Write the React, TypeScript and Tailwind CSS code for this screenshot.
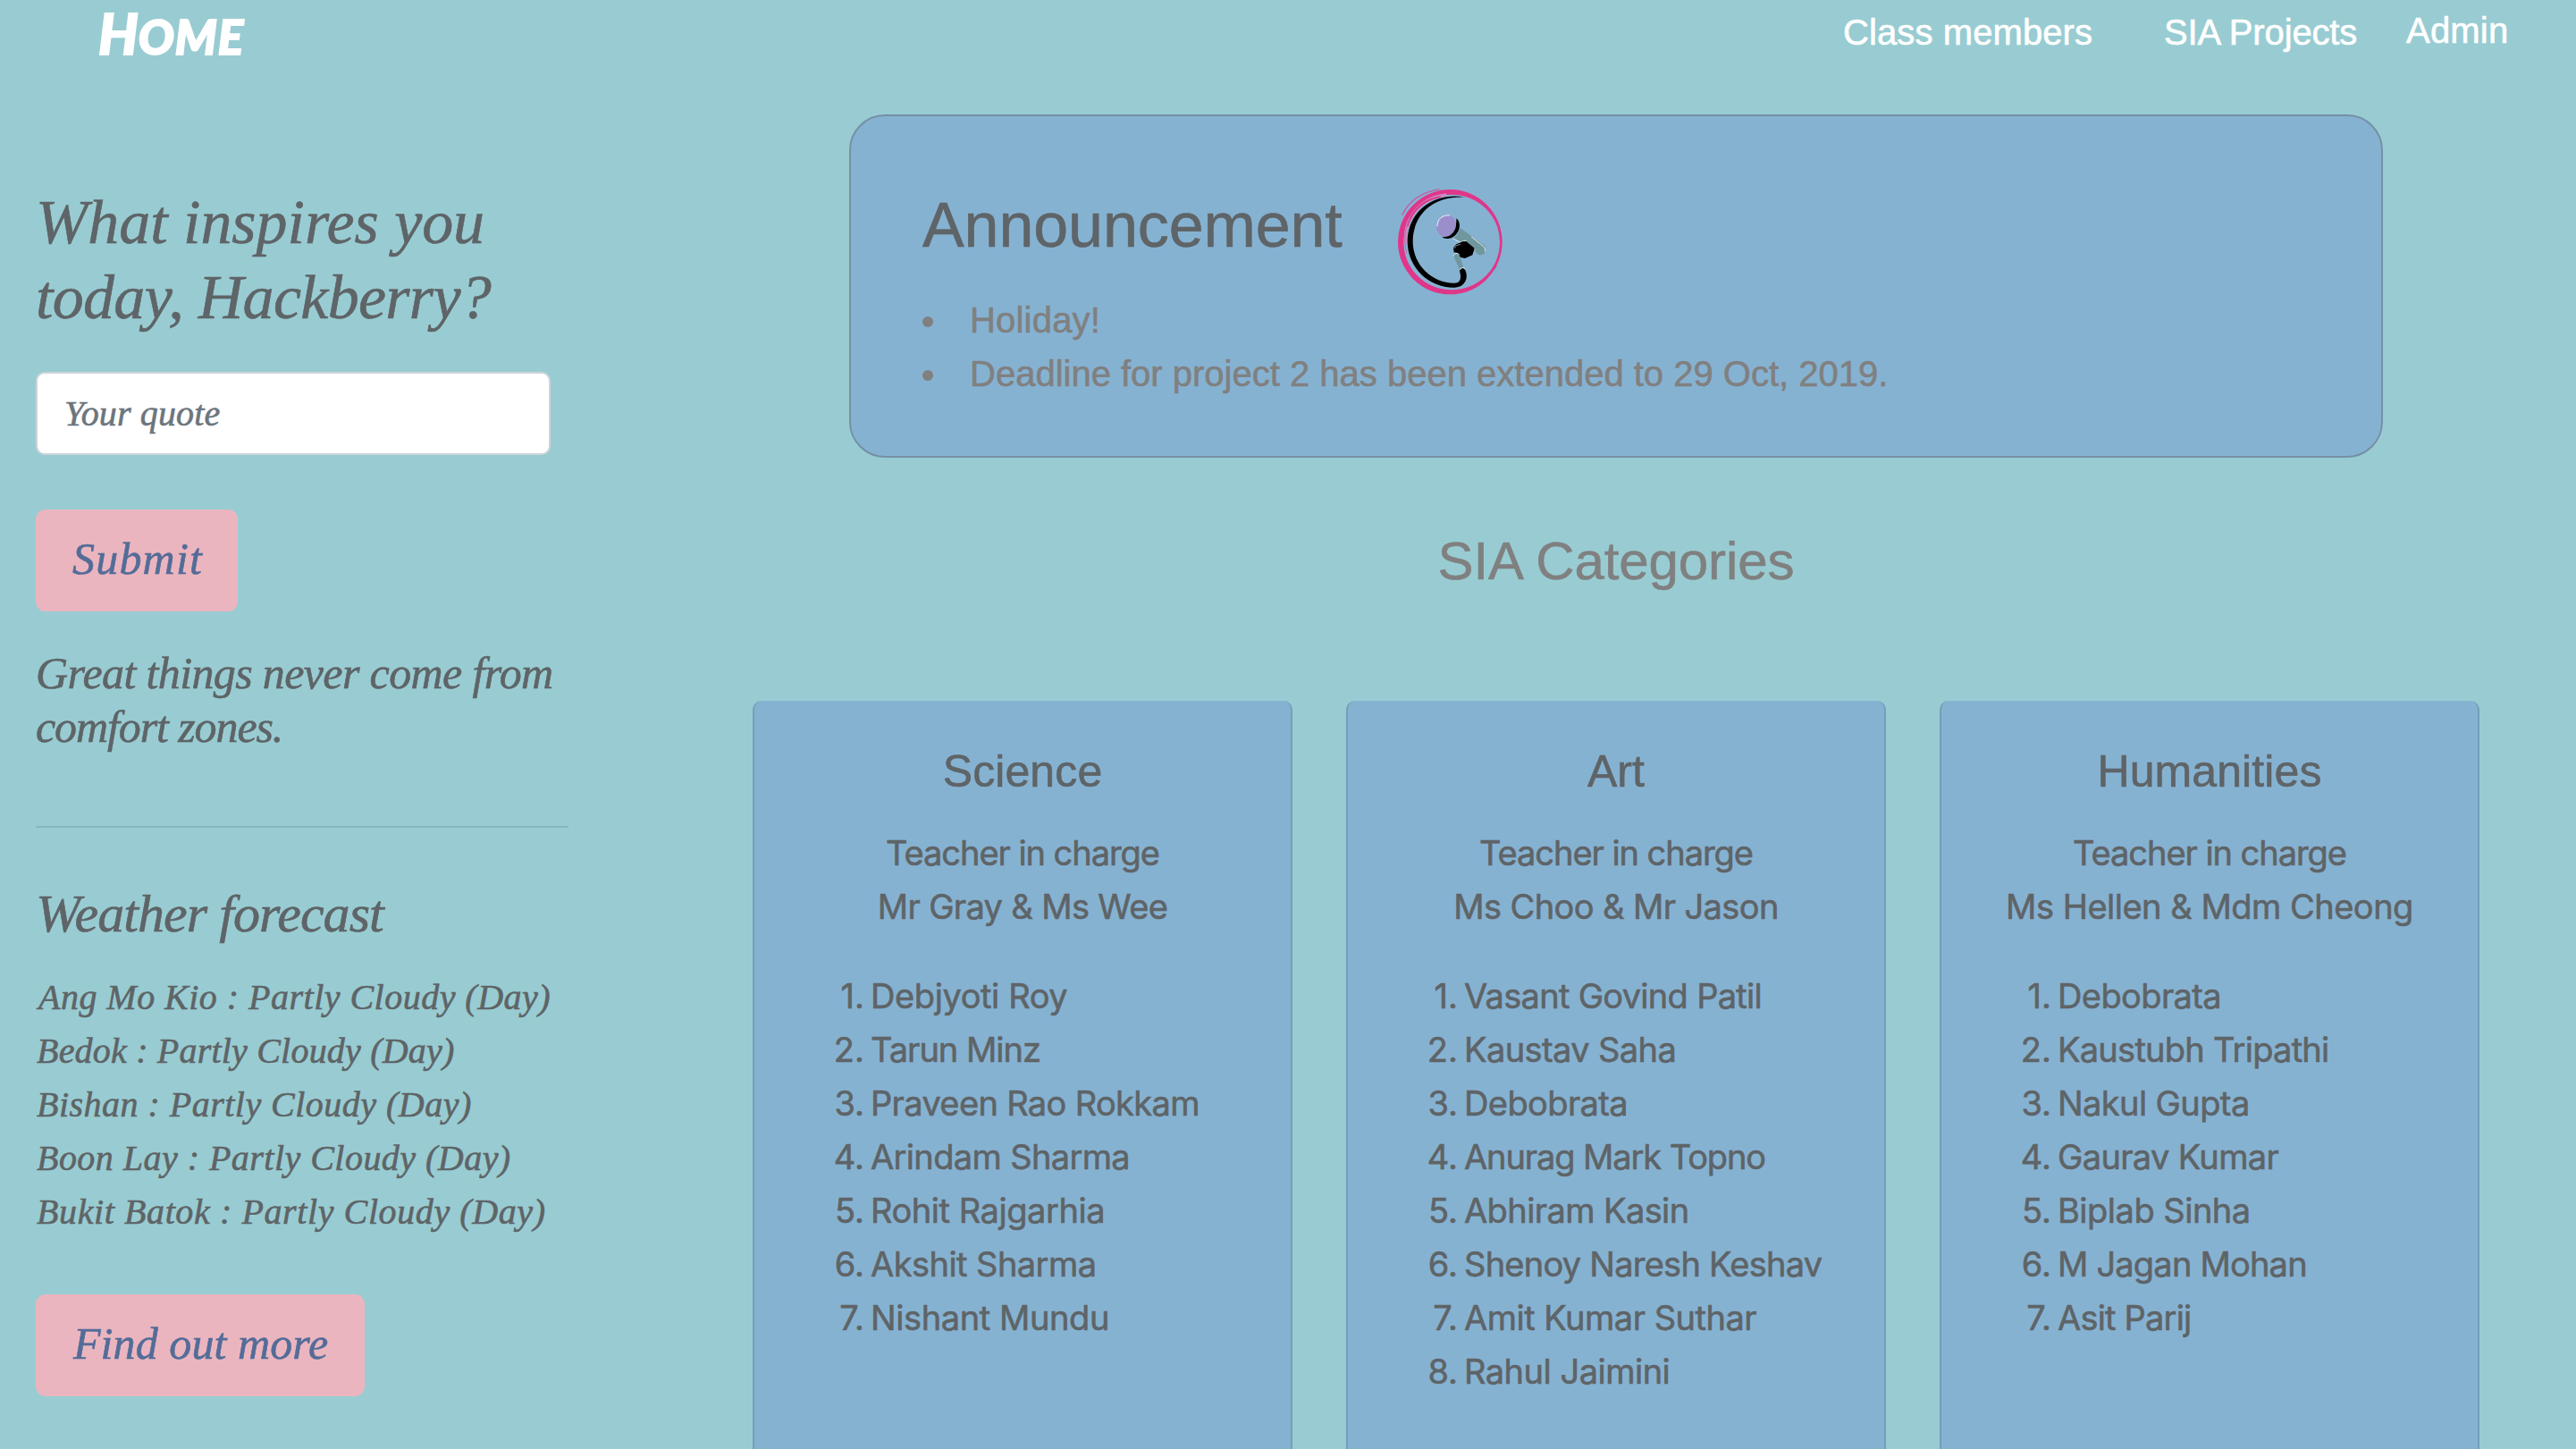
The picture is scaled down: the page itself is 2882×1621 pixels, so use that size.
type Student = { name: string; tracking: string };
type Category = {
  title: string;
  teachers: string;
  teachersTracking: string;
  students: Student[];
};

const categories: Category[] = [
  {
    title: "Science",
    teachers: "Mr Gray & Ms Wee",
    teachersTracking: "tracking-[-0.65px]",
    students: [
      { name: "Debjyoti Roy", tracking: "tracking-[-0.4px]" },
      { name: "Tarun Minz", tracking: "tracking-[-1px]" },
      { name: "Praveen Rao Rokkam", tracking: "tracking-[-0.65px]" },
      { name: "Arindam Sharma", tracking: "tracking-[-0.65px]" },
      { name: "Rohit Rajgarhia", tracking: "tracking-[-0.45px]" },
      { name: "Akshit Sharma", tracking: "tracking-[-0.55px]" },
      { name: "Nishant Mundu", tracking: "tracking-[-0.4px]" },
    ],
  },
  {
    title: "Art",
    teachers: "Ms Choo & Mr Jason",
    teachersTracking: "tracking-[-0.6px]",
    students: [
      { name: "Vasant Govind Patil", tracking: "tracking-[-0.7px]" },
      { name: "Kaustav Saha", tracking: "tracking-[-0.6px]" },
      { name: "Debobrata", tracking: "tracking-[-0.6px]" },
      { name: "Anurag Mark Topno", tracking: "tracking-[-1.1px]" },
      { name: "Abhiram Kasin", tracking: "tracking-[-0.6px]" },
      { name: "Shenoy Naresh Keshav", tracking: "tracking-[-0.75px]" },
      { name: "Amit Kumar Suthar", tracking: "tracking-[-0.5px]" },
      { name: "Rahul Jaimini", tracking: "tracking-[-0.5px]" },
    ],
  },
  {
    title: "Humanities",
    teachers: "Ms Hellen & Mdm Cheong",
    teachersTracking: "tracking-[-0.5px]",
    students: [
      { name: "Debobrata", tracking: "tracking-[-0.6px]" },
      { name: "Kaustubh Tripathi", tracking: "tracking-[-0.75px]" },
      { name: "Nakul Gupta", tracking: "tracking-[-0.6px]" },
      { name: "Gaurav Kumar", tracking: "tracking-[-0.65px]" },
      { name: "Biplab Sinha", tracking: "tracking-[-0.5px]" },
      { name: "M Jagan Mohan", tracking: "tracking-[-0.8px]" },
      { name: "Asit Parij", tracking: "tracking-[-0.8px]" },
    ],
  },
];

const forecast = [
  { text: "Ang Mo Kio : Partly Cloudy (Day)", style: "pl-[3px] tracking-[0.48px]" },
  { text: "Bedok : Partly Cloudy (Day)", style: "pl-px tracking-[0.2px]" },
  { text: "Bishan : Partly Cloudy (Day)", style: "pl-px tracking-[0.48px]" },
  { text: "Boon Lay : Partly Cloudy (Day)", style: "pl-px tracking-[0.47px]" },
  { text: "Bukit Batok : Partly Cloudy (Day)", style: "pl-px tracking-[0.6px]" },
];

function MicrophoneIcon() {
  return (
    <svg viewBox="66 60 360 360" className="h-[120px] w-[120px] shrink-0">
      <path
        fillRule="evenodd"
        fill="#e0368a"
        d="M72 242a175 176 0 1 0 350 0a175 176 0 1 0-350 0ZM91 243a161.500 160 0 1 0 323 0a161.500 160 0 1 0-323 0Z"
      />
      <path d="M211 65C155 74 108 104 86 152" fill="none" stroke="#c45aa0" strokeWidth="4" />
      <path d="M99 250C88 165 150 92 235 84" fill="none" stroke="#c98cc0" strokeWidth="11" />
      <path d="M103 190C120 130 165 98 215 91" fill="none" stroke="#e0368a" strokeWidth="6" />
      <path d="M102 282C88 235 98 190 112 164" fill="none" stroke="#b86fb0" strokeWidth="3" />
      <path d="M403 320C396 334 386 344 374 349" fill="none" stroke="#d0408f" strokeWidth="4" />
      <path
        d="M298 92C195 72 104 140 104 240C104 332 180 397 262 395C296 394 308 366 300 342C296 328 282 326 278 335C286 362 283 379 262 380C190 381 122 322 122 240C122 160 180 86 298 92Z"
        fill="#000"
      />
      <path d="M268 163C285 176 281 206 262 222C250 232 232 234 220 226C250 224 270 200 268 163Z" fill="#000" />
      <ellipse cx="234" cy="188" rx="32" ry="37" transform="rotate(20 234 188)" fill="#9a8fcb" />
      <path d="M204 190C204 165 222 150 246 153" fill="none" stroke="#f2f4fa" strokeWidth="3" />
      <path
        d="M280 194L361 253C373 265 366 283 351 286C343 287 337 283 332 274L300 238L284 243L258 231C268 222 277 212 280 194Z"
        fill="#6f979e"
      />
      <path d="M258 231L281 243L298 237L332 268M318 224L358 256C364 262 366 268 364 274" fill="none" stroke="#e3ecec" strokeWidth="3" />
      <path d="M290 240L302 240L329 263L322 286L297 297L281 293L272 279L260 277L258 262L268 250Z" fill="#000" />
      <path d="M261 264L268 254L282 250" fill="none" stroke="#c8d6d8" strokeWidth="2" />
      <path d="M258 289C261 279 273 278 278 286L292 328L280 336Z" fill="#6f979e" />
      <path d="M258 290C261 279 273 278 277 284M279 337C282 329 290 325 297 332" fill="none" stroke="#e3ecec" strokeWidth="3" />
    </svg>
  );
}

function Header() {
  return (
    <header className="flex h-[128px] items-start text-white">
      <a className="ml-[110px] mt-[7px] font-[Lato,sans-serif] text-[62px] leading-[60px] font-black italic [-webkit-text-stroke:2px_white]">
        H<span className="text-[53px] tracking-[1px] uppercase">ome</span>
      </a>
      <nav className="ml-auto flex text-[40px] leading-[60px]">
        <a className="w-[359px] pt-[6px] tracking-[0.1px]">Class members</a>
        <a className="w-[271px] pt-[6px] tracking-[-0.14px]">SIA Projects</a>
        <a className="w-[190px] pt-[4px] tracking-[0.2px]">Admin</a>
      </nav>
    </header>
  );
}

function Sidebar() {
  return (
    <aside className="w-[636px] shrink-0 pt-[79px] pl-[40px] font-['Liberation_Serif',serif] text-[#5e6467] italic">
      <h2 className="text-[70px] leading-[84px] whitespace-nowrap">
        <span className="block tracking-[-0.05px]">What inspires you</span>
        <span className="block tracking-[-0.7px]">today, Hackberry?</span>
      </h2>
      <input
        placeholder="Your quote"
        className="mt-[41px] block h-[93px] w-[576px] rounded-[10px] border-2 border-[#ced4da] bg-white pl-[30px] text-[40px] tracking-[0.14px] italic placeholder:text-[#6c757d]"
      />
      <button className="mt-[61px] block h-[114px] w-[226px] rounded-[11px] bg-[#ebb5bf] pb-[3px] pl-[41px] text-left text-[50px] tracking-[1.2px] text-[#536c98] italic">
        Submit
      </button>
      <p className="mt-[39px] text-[50px] leading-[60px] whitespace-nowrap">
        <span className="block tracking-[-0.63px]">Great things never come from</span>
        <span className="block tracking-[-1.1px]">comfort zones.</span>
      </p>
      <hr className="mt-[81px] border-t-2 border-[#86b8bf]" />
      <h3 className="mt-[60px] text-[60px] leading-[72px] tracking-[-0.94px]">Weather forecast</h3>
      <ul className="mt-[28px] text-[40px] leading-[60px] whitespace-nowrap">
        {forecast.map((f) => (
          <li key={f.text} className={f.style}>
            {f.text}
          </li>
        ))}
      </ul>
      <button className="mt-[62px] block h-[114px] w-[368px] rounded-[11px] bg-[#ebb5bf] pb-[3px] pl-[42px] text-left text-[50px] tracking-[0.08px] text-[#536c98] italic">
        Find out more
      </button>
    </aside>
  );
}

function Announcement() {
  return (
    <section className="mx-[108px] h-[384px] rounded-[40px] border-2 border-[#7590a6] bg-[#86b2d2] pt-[80px] pl-[80px]">
      <div className="flex h-[118px] items-start">
        <h2 className="w-[530px] text-[70px] leading-[84px] tracking-[-0.1px] text-[#5e6467]">Announcement</h2>
        <MicrophoneIcon />
      </div>
      <ul className="text-[40px] leading-[60px] text-[#808080]">
        <li className="flex items-center">
          <span className="mt-[3px] mr-[41px] size-[12px] rounded-full bg-[#808080]" />
          <span className="tracking-[0.2px]">Holiday!</span>
        </li>
        <li className="flex items-center">
          <span className="mt-[3px] mr-[41px] size-[12px] rounded-full bg-[#808080]" />
          <span>Deadline for project 2 has been extended to 29 Oct, 2019.</span>
        </li>
      </ul>
    </section>
  );
}

function CategoryCard({ category }: { category: Category }) {
  return (
    <article className="rounded-t-[10px] border-x-2 border-[#739fb9] bg-[#86b2d2] pt-[49px] text-[#5e6467]">
      <h3 className="text-center text-[50px] leading-[60px] tracking-[0.1px]">{category.title}</h3>
      <div className="mt-[31px] text-center font-[Inter,sans-serif] text-[38px] leading-[60px] whitespace-nowrap">
        <p className="tracking-[-1.05px]">Teacher in charge</p>
        <p className={category.teachersTracking}>{category.teachers}</p>
      </div>
      <ol className="mt-[40px] font-[Inter,sans-serif] text-[38px] leading-[60px] whitespace-nowrap">
        {category.students.map((s, i) => (
          <li key={s.name} className="flex">
            <span className="mr-[7px] w-[123px] text-right">{i + 1}.</span>
            <span className={s.tracking}>{s.name}</span>
          </li>
        ))}
      </ol>
    </article>
  );
}

export default function App() {
  return (
    <div className="h-[1621px] w-[2882px] overflow-hidden bg-[#98ccd2] font-['Liberation_Sans',Arial,sans-serif] [-webkit-text-stroke:0.6px_currentColor]">
      <Header />
      <div className="flex h-[1493px]">
        <Sidebar />
        <main className="ml-[206px] flex w-[1932px] flex-col">
          <Announcement />
          <h2 className="mt-[80px] text-center text-[60px] leading-[72px] tracking-[-0.1px] text-[#808080]">
            SIA Categories
          </h2>
          <div className="mt-[120px] grid grow grid-cols-3 gap-[60px]">
            {categories.map((c) => (
              <CategoryCard key={c.title} category={c} />
            ))}
          </div>
        </main>
      </div>
    </div>
  );
}
